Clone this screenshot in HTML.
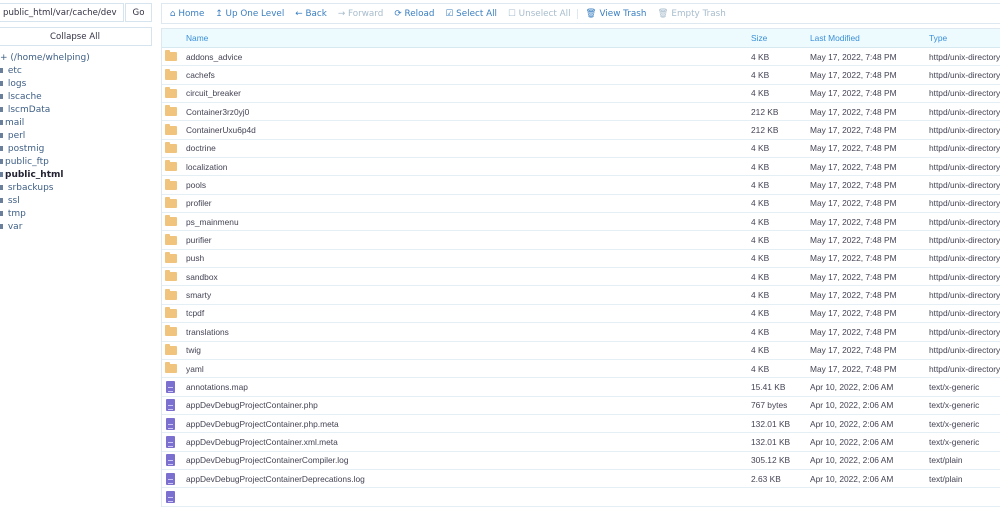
<!DOCTYPE html><html><head><style>
body{margin:0;width:1000px;height:492px;overflow:hidden;background:#fff;font-family:"Liberation Sans",sans-serif;position:relative}
.l{font-family:"DejaVu Sans","Liberation Sans",sans-serif;font-size:8.6px;color:#3e5f86}
#inp{position:absolute;left:-2px;top:3px;width:126px;height:19px;border:1px solid #d6e4ef;box-sizing:border-box;line-height:18px;padding-left:4px;color:#334}
#go{position:absolute;left:125px;top:3px;width:27px;height:19px;border:1px solid #d6e4ef;box-sizing:border-box;text-align:center;line-height:18px;color:#334}
#col{position:absolute;left:-2px;top:27px;width:154px;height:19px;border:1px solid #d6e4ef;box-sizing:border-box;text-align:center;line-height:18px;color:#334}
.tree{position:absolute;left:0;top:52px;line-height:13px;font-size:9px}
.tree b{display:inline-block;width:3px;height:5px;background:#6a7f99;vertical-align:middle;margin-right:2px}
#tb{position:absolute;left:161px;top:3px;width:845px;height:21px;border:1px solid #dde8f0;box-sizing:border-box;font-size:8.8px;display:flex;align-items:center}
#tb span{margin-left:11px;color:#3a7fc1}
#tb span.d{color:#a7bccc}
#grid{position:absolute;left:161px;top:28px;width:845px;border-left:1px solid #dde8f0}
.r{height:18.35px;display:flex;align-items:center;border-bottom:1px solid #e3eef5;box-sizing:border-box;font-size:8.4px;color:#445;position:relative}
.h{height:20px;background:#eefbfe;color:#3a8fd8;border-top:1px solid #dde8f0;border-bottom:1px solid #d6e8f0}
.r>*{position:absolute}
.n{left:24px}.s{left:589px}.m{left:648px}.t{left:767px}
.f{left:3px;width:12px;height:9px;background:#f0c47c;border-radius:1px}
.f:before{content:"";position:absolute;left:0;top:-2px;width:5px;height:3px;background:#f0c47c;border-radius:1px 1px 0 0}
.p{left:4px;width:9px;height:12px;background:#7b6fd0;border-radius:1px}
.p:after{content:"";position:absolute;left:2px;top:6px;width:5px;height:3px;border-top:1px solid #cfc9f2;border-bottom:1px solid #cfc9f2}
</style></head><body>
<div id="inp" class="l">public_html/var/cache/dev</div>
<div id="go" class="l">Go</div>
<div id="col" class="l">Collapse All</div>
<div class="tree l">
<div>+ (/home/whelping)</div><div><b></b> etc</div><div><b></b> logs</div><div><b></b> lscache</div><div><b></b> lscmData</div><div><b></b>mail</div><div><b></b> perl</div><div><b></b> postmig</div><div><b></b>public_ftp</div><div style="font-weight:bold;color:#223"><b></b>public_html</div><div><b></b> srbackups</div><div><b></b> ssl</div><div><b></b> tmp</div><div><b></b> var</div>
</div>
<div id="tb" class="l"><span style="margin-left:8px">⌂ Home</span><span>↥ Up One Level</span><span>← Back</span><span class="d">→ Forward</span><span>⟳ Reload</span><span>☑ Select All</span><span class="d">☐ Unselect All</span><span style="border-left:1px solid #dde8f0;padding-left:8px;margin-left:6px">🗑 View Trash</span><span class="d">🗑 Empty Trash</span></div>
<div id="grid">
<div class="r h"><span class="n">Name</span><span class="s">Size</span><span class="m">Last Modified</span><span class="t">Type</span></div>
<div class="r"><i class="f"></i><span class="n">addons_advice</span><span class="s">4 KB</span><span class="m">May 17, 2022, 7:48 PM</span><span class="t">httpd/unix-directory</span></div>
<div class="r"><i class="f"></i><span class="n">cachefs</span><span class="s">4 KB</span><span class="m">May 17, 2022, 7:48 PM</span><span class="t">httpd/unix-directory</span></div>
<div class="r"><i class="f"></i><span class="n">circuit_breaker</span><span class="s">4 KB</span><span class="m">May 17, 2022, 7:48 PM</span><span class="t">httpd/unix-directory</span></div>
<div class="r"><i class="f"></i><span class="n">Container3rz0yj0</span><span class="s">212 KB</span><span class="m">May 17, 2022, 7:48 PM</span><span class="t">httpd/unix-directory</span></div>
<div class="r"><i class="f"></i><span class="n">ContainerUxu6p4d</span><span class="s">212 KB</span><span class="m">May 17, 2022, 7:48 PM</span><span class="t">httpd/unix-directory</span></div>
<div class="r"><i class="f"></i><span class="n">doctrine</span><span class="s">4 KB</span><span class="m">May 17, 2022, 7:48 PM</span><span class="t">httpd/unix-directory</span></div>
<div class="r"><i class="f"></i><span class="n">localization</span><span class="s">4 KB</span><span class="m">May 17, 2022, 7:48 PM</span><span class="t">httpd/unix-directory</span></div>
<div class="r"><i class="f"></i><span class="n">pools</span><span class="s">4 KB</span><span class="m">May 17, 2022, 7:48 PM</span><span class="t">httpd/unix-directory</span></div>
<div class="r"><i class="f"></i><span class="n">profiler</span><span class="s">4 KB</span><span class="m">May 17, 2022, 7:48 PM</span><span class="t">httpd/unix-directory</span></div>
<div class="r"><i class="f"></i><span class="n">ps_mainmenu</span><span class="s">4 KB</span><span class="m">May 17, 2022, 7:48 PM</span><span class="t">httpd/unix-directory</span></div>
<div class="r"><i class="f"></i><span class="n">purifier</span><span class="s">4 KB</span><span class="m">May 17, 2022, 7:48 PM</span><span class="t">httpd/unix-directory</span></div>
<div class="r"><i class="f"></i><span class="n">push</span><span class="s">4 KB</span><span class="m">May 17, 2022, 7:48 PM</span><span class="t">httpd/unix-directory</span></div>
<div class="r"><i class="f"></i><span class="n">sandbox</span><span class="s">4 KB</span><span class="m">May 17, 2022, 7:48 PM</span><span class="t">httpd/unix-directory</span></div>
<div class="r"><i class="f"></i><span class="n">smarty</span><span class="s">4 KB</span><span class="m">May 17, 2022, 7:48 PM</span><span class="t">httpd/unix-directory</span></div>
<div class="r"><i class="f"></i><span class="n">tcpdf</span><span class="s">4 KB</span><span class="m">May 17, 2022, 7:48 PM</span><span class="t">httpd/unix-directory</span></div>
<div class="r"><i class="f"></i><span class="n">translations</span><span class="s">4 KB</span><span class="m">May 17, 2022, 7:48 PM</span><span class="t">httpd/unix-directory</span></div>
<div class="r"><i class="f"></i><span class="n">twig</span><span class="s">4 KB</span><span class="m">May 17, 2022, 7:48 PM</span><span class="t">httpd/unix-directory</span></div>
<div class="r"><i class="f"></i><span class="n">yaml</span><span class="s">4 KB</span><span class="m">May 17, 2022, 7:48 PM</span><span class="t">httpd/unix-directory</span></div>
<div class="r"><i class="p"></i><span class="n">annotations.map</span><span class="s">15.41 KB</span><span class="m">Apr 10, 2022, 2:06 AM</span><span class="t">text/x-generic</span></div>
<div class="r"><i class="p"></i><span class="n">appDevDebugProjectContainer.php</span><span class="s">767 bytes</span><span class="m">Apr 10, 2022, 2:06 AM</span><span class="t">text/x-generic</span></div>
<div class="r"><i class="p"></i><span class="n">appDevDebugProjectContainer.php.meta</span><span class="s">132.01 KB</span><span class="m">Apr 10, 2022, 2:06 AM</span><span class="t">text/x-generic</span></div>
<div class="r"><i class="p"></i><span class="n">appDevDebugProjectContainer.xml.meta</span><span class="s">132.01 KB</span><span class="m">Apr 10, 2022, 2:06 AM</span><span class="t">text/x-generic</span></div>
<div class="r"><i class="p"></i><span class="n">appDevDebugProjectContainerCompiler.log</span><span class="s">305.12 KB</span><span class="m">Apr 10, 2022, 2:06 AM</span><span class="t">text/plain</span></div>
<div class="r"><i class="p"></i><span class="n">appDevDebugProjectContainerDeprecations.log</span><span class="s">2.63 KB</span><span class="m">Apr 10, 2022, 2:06 AM</span><span class="t">text/plain</span></div>
<div class="r"><i class="p"></i></div>
</div>
</body></html>
